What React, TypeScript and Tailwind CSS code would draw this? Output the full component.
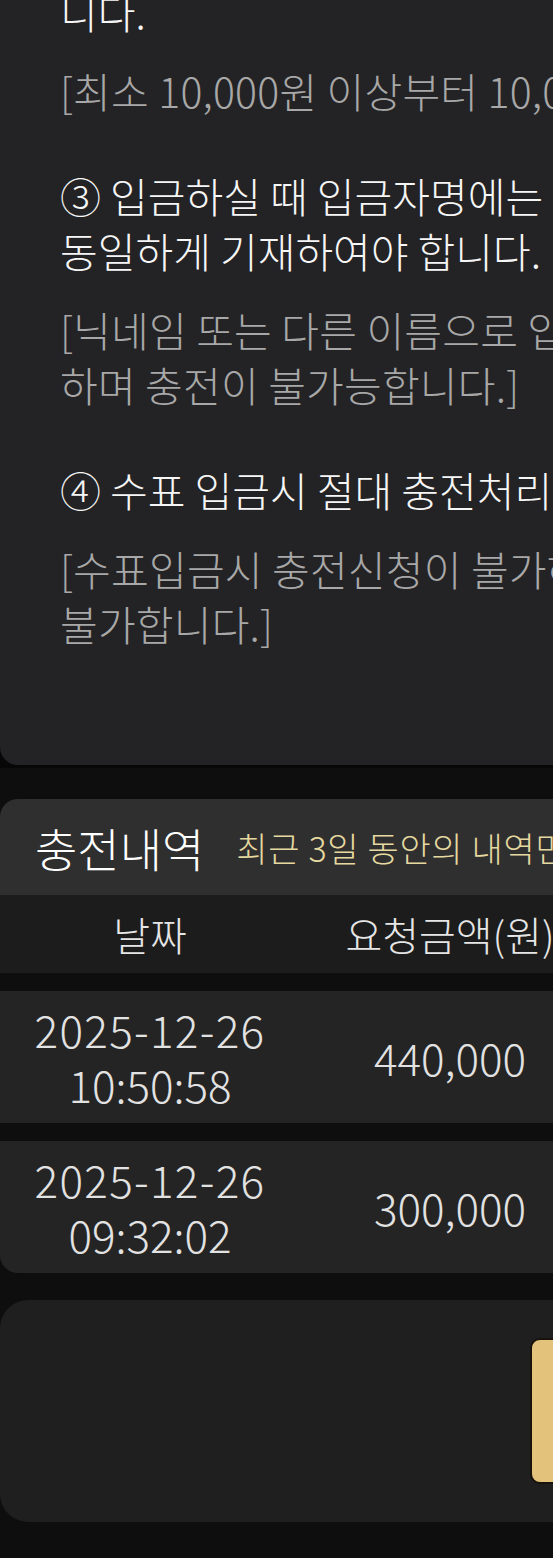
import React from 'react';

type Notice = { main: string[]; sub: string[] };

const notices: Notice[] = [
  {
    main: ['② 입금은 반드시 충전신청 후 10,000원 단위로 입금하셔야 합', '니다.'],
    sub: ['[최소 10,000원 이상부터 10,000원 단위로 충전신청이 가능합니다.]'],
  },
  {
    main: ['③ 입금하실 때 입금자명에는 회원가입시 등록한 예금주명과', '동일하게 기재하여야 합니다.'],
    sub: ['[닉네임 또는 다른 이름으로 입금하실 경우 확인이 불가', '하며 충전이 불가능합니다.]'],
  },
  {
    main: ['④ 수표 입금시 절대 충전처리 되지 않습니다.'],
    sub: ['[수표입금시 충전신청이 불가하며 입금하신 금액은 반환이', '불가합니다.]'],
  },
];

const history = [
  { date: '2025-12-26', time: '10:50:58', amount: '440,000', bonus: '0', status: '대기' },
  { date: '2025-12-26', time: '09:32:02', amount: '300,000', bonus: '0', status: '완료' },
];

function Lines({ lines, className }: { lines: string[]; className: string }) {
  return (
    <div className={className}>
      {lines.map((l, i) => (
        <div key={i} className="whitespace-nowrap">
          {l}
        </div>
      ))}
    </div>
  );
}

export default function App() {
  return (
    <div className="w-full min-h-[1558px] overflow-hidden bg-[#0e0e0e] font-['Noto_Sans_CJK_KR','Noto_Sans',sans-serif] font-extralight">
      <div className="w-[1200px]">
        {/* Notice panel */}
        <div className="-mt-[71px] bg-[#070707] pb-[3px]">
          <div className="flex flex-col gap-[50px] rounded-b-[18px] bg-[#232325] pl-[60px] pb-[114px]">
            {notices.map((n, i) => (
              <div key={i} className="flex flex-col gap-[24px]">
                <Lines lines={n.main} className="text-[41px] leading-[55px] text-[#f6f6f6]" />
                <Lines lines={n.sub} className="text-[41px] leading-[55px] tracking-[0.005em] text-[#a8a8a8]" />
              </div>
            ))}
          </div>
        </div>

        {/* History */}
        <div className="mt-[31px]">
          <div className="flex h-[96px] items-center gap-[32px] rounded-t-[18px] bg-[#2f2f2f] pl-[35px]">
            <span className="text-[46px] text-white">충전내역</span>
            <span className="text-[34px] tracking-[0.02em] text-[#e6d9a0]">최근 3일 동안의 내역만 표시됩니다.</span>
          </div>
          <div className="grid h-[78px] grid-cols-[300px_300px_300px_300px] items-center bg-[#1c1c1c] text-center text-[40px] text-[#e6e6e6]">
            <span>날짜</span>
            <span>요청금액(원)</span>
            <span>보너스</span>
            <span>상태</span>
          </div>
          <div className="mt-[18px] flex flex-col gap-[18px]">
            {history.map((h, i) => (
              <div
                key={i}
                className={`grid h-[132px] grid-cols-[300px_300px_300px_300px] items-center bg-[#242424] text-center text-[44px] text-[#e2e2e2] ${i === history.length - 1 ? 'rounded-b-[18px]' : ''}`}
              >
                <div className="flex flex-col leading-[55px]">
                  <span className="tracking-[0.03em]">{h.date}</span>
                  <span>{h.time}</span>
                </div>
                <span>{h.amount}</span>
                <span>{h.bonus}</span>
                <span>{h.status}</span>
              </div>
            ))}
          </div>
        </div>

        {/* Bottom action panel */}
        <div className="mt-[27px] flex h-[222px] items-center rounded-[28px] bg-[#1f1f1f] pl-[530px]">
          <button className="h-[146px] w-[400px] rounded-[10px] border-2 border-[#17120b] bg-[#e3c27b] text-[40px] text-[#1a1a1a]">
            충전신청
          </button>
        </div>
      </div>
    </div>
  );
}
